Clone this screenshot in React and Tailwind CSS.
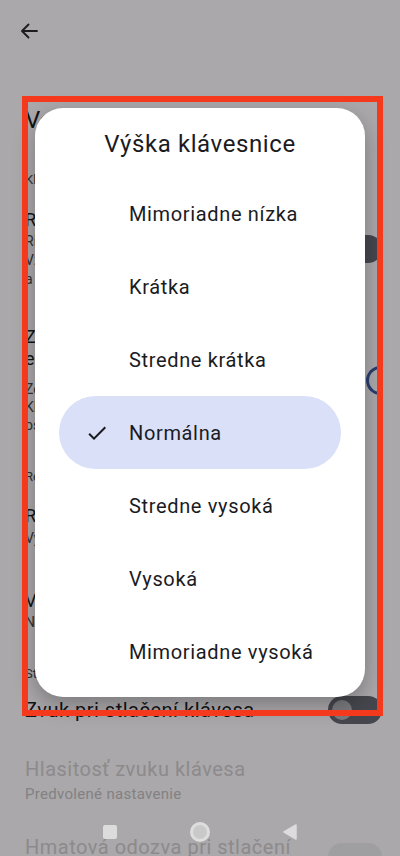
import React from "react";

const options = [
  "Mimoriadne nízka",
  "Krátka",
  "Stredne krátka",
  "Normálna",
  "Stredne vysoká",
  "Vysoká",
  "Mimoriadne vysoká",
];

function CheckIcon() {
  return (
    <svg width="24" height="24" viewBox="0 0 24 24" className="shrink-0">
      <path
        d="M9 16.17 4.83 12l-1.42 1.41L9 19 21 7l-1.41-1.41z"
        fill="#1b1b1f"
      />
    </svg>
  );
}

function BackArrow() {
  return (
    <svg width="18" height="16" viewBox="0 0 18 16" fill="none">
      <path
        d="M17 8H2M8.5 1.5 2 8l6.5 6.5"
        stroke="#2b2b30"
        strokeWidth="1.9"
        strokeLinecap="round"
        strokeLinejoin="round"
      />
    </svg>
  );
}

function SectionHeader({ children, className }) {
  return (
    <div
      className={
        "pl-[25px] text-[13px] leading-[16px] text-[#44474f] whitespace-nowrap " +
        className
      }
    >
      {children}
    </div>
  );
}

function Sub({ children }) {
  return <div className="whitespace-nowrap">{children}</div>;
}

function OffSwitch() {
  return (
    <div className="flex h-[28px] w-[54px] shrink-0 items-center rounded-full bg-[#676773] pl-[4px]">
      <div className="h-[20px] w-[20px] rounded-full bg-[#b5b5bc]" />
    </div>
  );
}

function OptionRow({ label, selected }) {
  return (
    <div
      className={
        "mx-6 flex h-[73px] items-center gap-[20px] rounded-full pl-[26px] " +
        (selected ? "bg-[#d9e0f8]" : "")
      }
    >
      <div className="flex h-[24px] w-[24px] shrink-0 items-center justify-center">
        {selected ? <CheckIcon /> : null}
      </div>
      <span className="text-[20px] leading-[28px] tracking-[0.65px] text-[#1b1b1f] whitespace-nowrap">
        {label}
      </span>
    </div>
  );
}

export default function App() {
  return (
    <div className="relative h-[856px] w-[400px] overflow-hidden bg-[#fbf8fb] font-[family-name:Roboto,'Noto_Sans',sans-serif] text-[#1b1b1f]">
      {/* settings page underneath the dialog */}
      <div className="flex flex-col">
        <div className="h-[104px] pl-[20px] pt-[23px]">
          <BackArrow />
        </div>
        <div className="h-[32px] pl-[25px] text-[24px] leading-[32px]">
          Voľby
        </div>

        <SectionHeader className="mt-[36px]">Klávesy</SectionHeader>

        <div className="mt-[20px] flex items-center justify-between pl-[25px] pr-[18px]">
          <div className="flex flex-col">
            <div className="text-[18px] leading-[24px]">Rad čísel</div>
            <div className="text-[14px] leading-[19px] text-[#46464f]">
              <Sub>Riadok s číslami v hornej časti</Sub>
              <Sub>Vždy zobrazovať nad písmenami</Sub>
              <Sub>a symbolmi</Sub>
            </div>
          </div>
          <OffSwitch />
        </div>

        <div className="mt-[37px] flex items-center justify-between pl-[25px]">
          <div className="flex flex-col">
            <div className="text-[18px] leading-[22px]">
              <Sub>Zobraziť kláves na prepínanie</Sub>
              <Sub>emodži</Sub>
            </div>
            <div className="mt-[10px] text-[14px] leading-[18px] text-[#46464f]">
              <Sub>Zobrazí sa vedľa medzerníka</Sub>
              <Sub>Kláves na prepínanie jazyka</Sub>
              <Sub>ostane viditeľný</Sub>
            </div>
          </div>
          <div className="mr-[17px] h-[29px] w-[17px] shrink-0 rounded-l-full border-y-[3px] border-l-[3px] border-[#3e5ba4] bg-[#fbfbff]" />
        </div>

        <SectionHeader className="mt-[35px]">Rozloženie</SectionHeader>

        <div className="mt-[19px] flex flex-col pl-[25px]">
          <div className="text-[18px] leading-[24px]">Režim jednej ruky</div>
          <div className="mt-[1px] text-[14px] leading-[19px] text-[#46464f]">
            Vypnuté
          </div>
        </div>

        <div className="mt-[41px] flex flex-col pl-[25px]">
          <div className="text-[18px] leading-[24px]">Výška klávesnice</div>
          <div className="text-[14px] leading-[19px] text-[#46464f]">
            Normálna
          </div>
        </div>

        <SectionHeader className="mt-[34px]">Stlačenie klávesu</SectionHeader>

        <div className="mt-[14px] flex items-center justify-between pl-[25px] pr-[18px]">
          <div className="text-[20px] leading-[28px] tracking-[0.5px] whitespace-nowrap">
            Zvuk pri stlačení klávesa
          </div>
          <OffSwitch />
        </div>

        <div className="mt-[31px] flex flex-col pl-[25px] text-[#cfcccf]">
          <div className="text-[20px] leading-[28px] tracking-[0.5px]">
            Hlasitosť zvuku klávesa
          </div>
          <div className="mt-[1px] text-[15px] leading-[20px] tracking-[0.3px] text-[#c2bfc2]">
            Predvolené nastavenie
          </div>
        </div>

        <div className="mt-[29px] flex items-start justify-between pl-[25px] pr-[18px]">
          <div className="w-[280px] text-[20px] leading-[28px] tracking-[0.5px] text-[#cfcccf]">
            Hmatová odozva pri stlačení klávesa
          </div>
          <div className="mt-[10px] h-[28px] w-[54px] shrink-0 rounded-full bg-[#ebe9ec]" />
        </div>
      </div>

      {/* dim layer */}
      <div className="absolute inset-0 bg-black/[0.32]" />

      {/* system navigation */}
      <div className="absolute left-0 right-0 top-[822px] flex h-[20px] items-center justify-center gap-[73px]">
        <div className="h-[14px] w-[14px] rounded-[2px] bg-[#dcdcdc]" />
        <div className="flex h-[20px] w-[20px] items-center justify-center rounded-full border-[3px] border-[#dedede] bg-[#c9c9c9]" />
        <svg width="14" height="16" viewBox="0 0 14 16">
          <path d="M13 1v14L1 8z" fill="#dcdcdc" strokeLinejoin="round" stroke="#dcdcdc" strokeWidth="1.5" />
        </svg>
      </div>

      {/* keyboard height dialog */}
      <div className="absolute left-[35px] top-[108px] flex h-[589px] w-[330px] flex-col rounded-[28px] bg-white pb-[9px] pt-[20px] shadow-[0_8px_22px_rgba(0,0,0,0.28)]">
        <div className="text-center text-[24px] leading-[32px] tracking-[0.6px] text-[#1b1b1f]">
          Výška klávesnice
        </div>
        <div className="mt-[17px] flex flex-col">
          {options.map((o) => (
            <OptionRow key={o} label={o} selected={o === "Normálna"} />
          ))}
        </div>
      </div>

      {/* highlight frame */}
      <div className="pointer-events-none absolute left-[22px] top-[96px] h-[620px] w-[361px] border-[6px] border-[#f4391c]" />
    </div>
  );
}
